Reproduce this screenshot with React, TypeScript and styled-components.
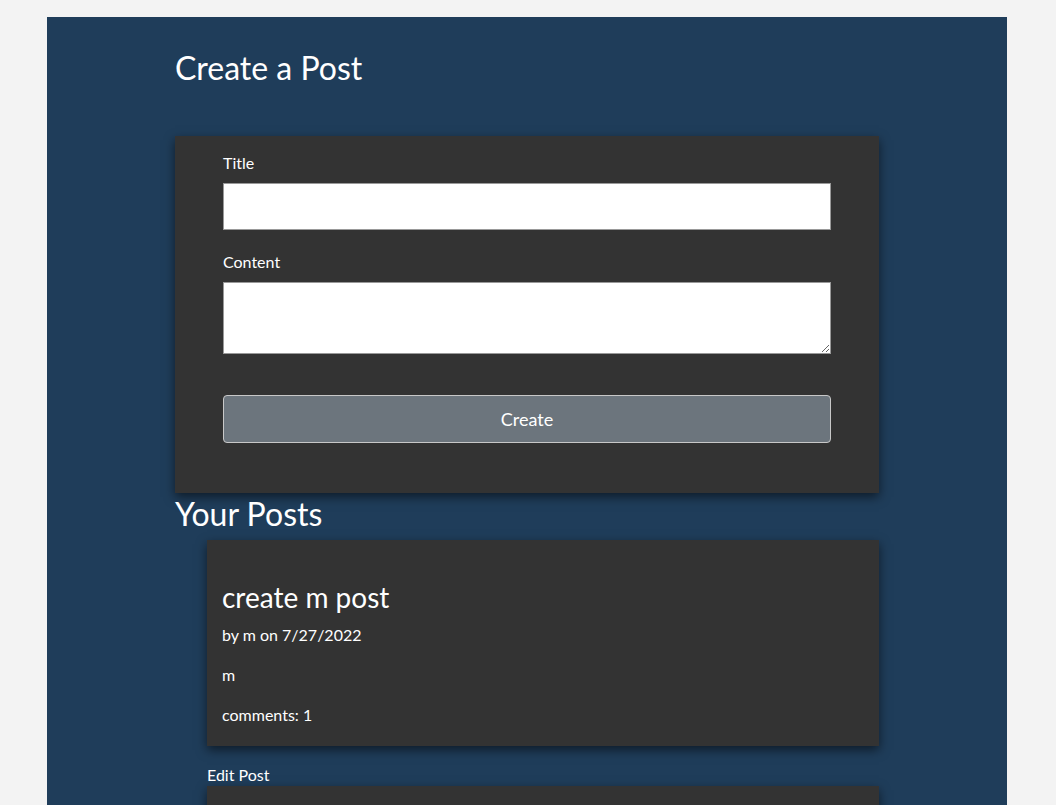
import React from "react";
import styled, { createGlobalStyle } from "styled-components";

const Global = createGlobalStyle`
  html, body { margin: 0; padding: 0; background: #f3f3f3; }
  body { font-family: Lato, "Open Sans", sans-serif; color: #fff; }
  * { box-sizing: border-box; }
`;

const Page = styled.div`
  width: 960px;
  margin: 17px 0 0 47px;
  background: #1f3d5a;
  padding: 0 128px 40px;
  min-height: 800px;
`;

const Heading = styled.h1`
  font-size: 32px;
  font-weight: 400;
  margin: 0;
  line-height: 38px;
`;

const CreateHeading = styled(Heading)`
  padding-top: 32px;
  margin-bottom: 49px;
`;

const FormCard = styled.form`
  background: #333333;
  box-shadow: 0 4px 10px rgba(0, 0, 0, 0.55);
  padding: 17px 48px 50px;
  display: flex;
  flex-direction: column;
`;

const Label = styled.label`
  font-size: 16px;
  line-height: 20px;
  margin-bottom: 10px;
`;

const TitleInput = styled.input`
  height: 47px;
  border: 1px solid #999;
  background: #fff;
  margin-bottom: 22px;
`;

const ContentArea = styled.textarea`
  height: 72px;
  border: 1px solid #999;
  background: #fff;
  margin-bottom: 41px;
  resize: vertical;
`;

const Button = styled.button`
  height: 48px;
  background: #6c757d;
  border: 1px solid #c8c8c8;
  border-radius: 4px;
  color: #fff;
  font-family: Lato, sans-serif;
  font-size: 18px;
`;

const PostsHeading = styled(Heading)`
  margin-top: 2px;
`;

const PostCard = styled.div`
  margin: 7px 0 0 32px;
  background: #333333;
  box-shadow: 0 4px 10px rgba(0, 0, 0, 0.55);
  padding: 41px 15px 21px;
`;

const PostTitle = styled.h2`
  font-size: 28px;
  font-weight: 400;
  margin: 0 0 10px;
  line-height: 1.2;
`;

const PostText = styled.p`
  font-size: 16px;
  margin: 0 0 20px;
  line-height: 20px;
  &:last-child { margin-bottom: 0; }
`;

const EditLink = styled.div`
  margin: 19px 0 0 32px;
  font-size: 16px;
  line-height: 20px;
`;

const NextCard = styled(PostCard)`
  margin-top: 1px;
  height: 120px;
`;

export default function App() {
  return (
    <>
      <Global />
      <Page>
        <CreateHeading>Create a Post</CreateHeading>
        <FormCard onSubmit={(e) => e.preventDefault()}>
          <Label>Title</Label>
          <TitleInput type="text" />
          <Label>Content</Label>
          <ContentArea />
          <Button type="submit">Create</Button>
        </FormCard>
        <PostsHeading>Your Posts</PostsHeading>
        <PostCard>
          <PostTitle>create m post</PostTitle>
          <PostText>by m on 7/27/2022</PostText>
          <PostText>m</PostText>
          <PostText>comments: 1</PostText>
        </PostCard>
        <EditLink>Edit Post</EditLink>
        <NextCard />
      </Page>
    </>
  );
}
